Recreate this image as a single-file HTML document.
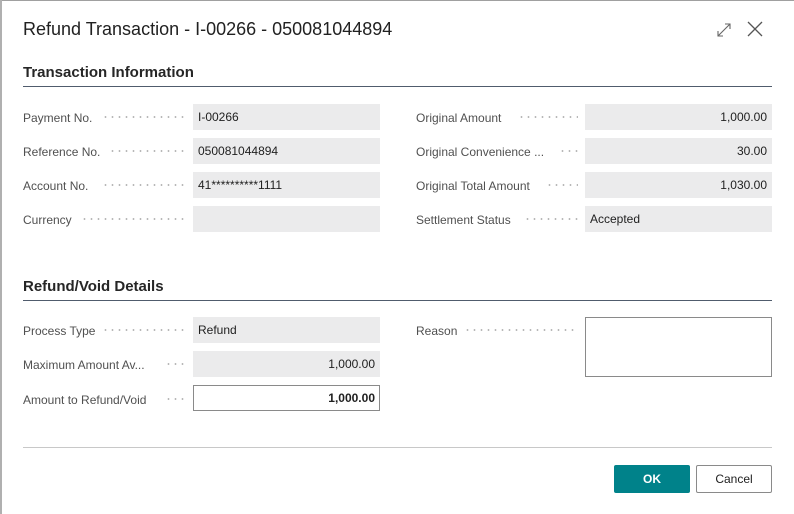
<!DOCTYPE html>
<html><head><style>
*{box-sizing:border-box;margin:0;padding:0}
body{width:794px;height:514px;background:#fff;font-family:"Liberation Sans",sans-serif;position:relative;overflow:hidden;color:#212121}
.a{position:absolute}
.lbl{position:absolute;font-size:12px;color:#505050;height:26px;line-height:28px;white-space:nowrap}
.dots{position:absolute;height:26px;border:none;background-image:radial-gradient(circle,#b8b8b8 0.8px,transparent 1px);background-size:7px 28px;background-repeat:repeat-x;background-position:0 center}
.in{position:absolute;height:26px;background:#ebebec;font-size:12px;line-height:27px;padding:0 5px;color:#212121;width:187px}
.r{text-align:right}
.h{position:absolute;font-size:15px;font-weight:bold;color:#262626;left:23px;top:0}
.ln{position:absolute;left:23px;width:749px;height:1px;background:#505c6d}
</style></head><body>
<div class="a" style="left:0;top:0;width:794px;height:1px;background:#a0a0a0"></div>
<div class="a" style="left:0;top:0;width:2px;height:514px;background:#b0b0b0"></div>
<div class="a" style="left:23px;top:19px;font-size:18px;color:#212121">Refund Transaction - I-00266 - 050081044894</div>
<svg class="a" style="left:715px;top:21px" width="18" height="18" viewBox="0 0 18 18" fill="none" stroke="#666" stroke-width="1.1"><path d="M3 15L15 3M10 3h5v5M3 10v5h5"/></svg>
<svg class="a" style="left:746px;top:20px" width="18" height="18" viewBox="0 0 18 18" fill="none" stroke="#555" stroke-width="1.3"><path d="M2 2L16 16M16 2L2 16"/></svg>

<div class="h" style="top:64px">Transaction Information</div>
<div class="ln" style="top:86px"></div>

<div class="lbl" style="left:23px;top:104px">Payment No.</div><div class="dots" style="left:102px;top:104px;width:84px"></div><div class="in" style="left:193px;top:104px">I-00266</div>
<div class="lbl" style="left:23px;top:138px">Reference No.</div><div class="dots" style="left:109px;top:138px;width:77px"></div><div class="in" style="left:193px;top:138px">050081044894</div>
<div class="lbl" style="left:23px;top:172px">Account No.</div><div class="dots" style="left:102px;top:172px;width:84px"></div><div class="in" style="left:193px;top:172px">41**********1111</div>
<div class="lbl" style="left:23px;top:206px">Currency</div><div class="dots" style="left:81px;top:206px;width:105px"></div><div class="in" style="left:193px;top:206px"></div>

<div class="lbl" style="left:416px;top:104px">Original Amount</div><div class="dots" style="left:518px;top:104px;width:60px"></div><div class="in r" style="left:585px;top:104px">1,000.00</div>
<div class="lbl" style="left:416px;top:138px">Original Convenience ...</div><div class="dots" style="left:559px;top:138px;width:19px"></div><div class="in r" style="left:585px;top:138px">30.00</div>
<div class="lbl" style="left:416px;top:172px">Original Total Amount</div><div class="dots" style="left:546px;top:172px;width:32px"></div><div class="in r" style="left:585px;top:172px">1,030.00</div>
<div class="lbl" style="left:416px;top:206px">Settlement Status</div><div class="dots" style="left:524px;top:206px;width:54px"></div><div class="in" style="left:585px;top:206px">Accepted</div>

<div class="h" style="top:278px">Refund/Void Details</div>
<div class="ln" style="top:300px"></div>

<div class="lbl" style="left:23px;top:317px">Process Type</div><div class="dots" style="left:102px;top:317px;width:84px"></div><div class="in" style="left:193px;top:317px">Refund</div>
<div class="lbl" style="left:23px;top:351px">Maximum Amount Av...</div><div class="dots" style="left:165px;top:351px;width:21px"></div><div class="in r" style="left:193px;top:351px">1,000.00</div>
<div class="lbl" style="left:23px;top:386px">Amount to Refund/Void</div><div class="dots" style="left:165px;top:386px;width:21px"></div><div class="in r" style="left:193px;top:385px;background:#fff;border:1px solid #8a8a8a;font-weight:bold;line-height:25px;padding-right:4px">1,000.00</div>

<div class="lbl" style="left:416px;top:317px">Reason</div><div class="dots" style="left:464px;top:317px;width:114px"></div>
<div class="a" style="left:585px;top:317px;width:187px;height:60px;border:1px solid #8a8a8a"></div>

<div class="a" style="left:23px;top:447px;width:749px;height:1px;background:#c8c8c8"></div>
<div class="a" style="left:614px;top:465px;width:76px;height:28px;background:#00828a;color:#fff;font-weight:bold;font-size:12px;text-align:center;line-height:29px;border-radius:2px">OK</div>
<div class="a" style="left:696px;top:465px;width:76px;height:28px;background:#fff;border:1px solid #8a8a8a;color:#212121;font-size:12px;text-align:center;line-height:27px;border-radius:2px">Cancel</div>
</body></html>
